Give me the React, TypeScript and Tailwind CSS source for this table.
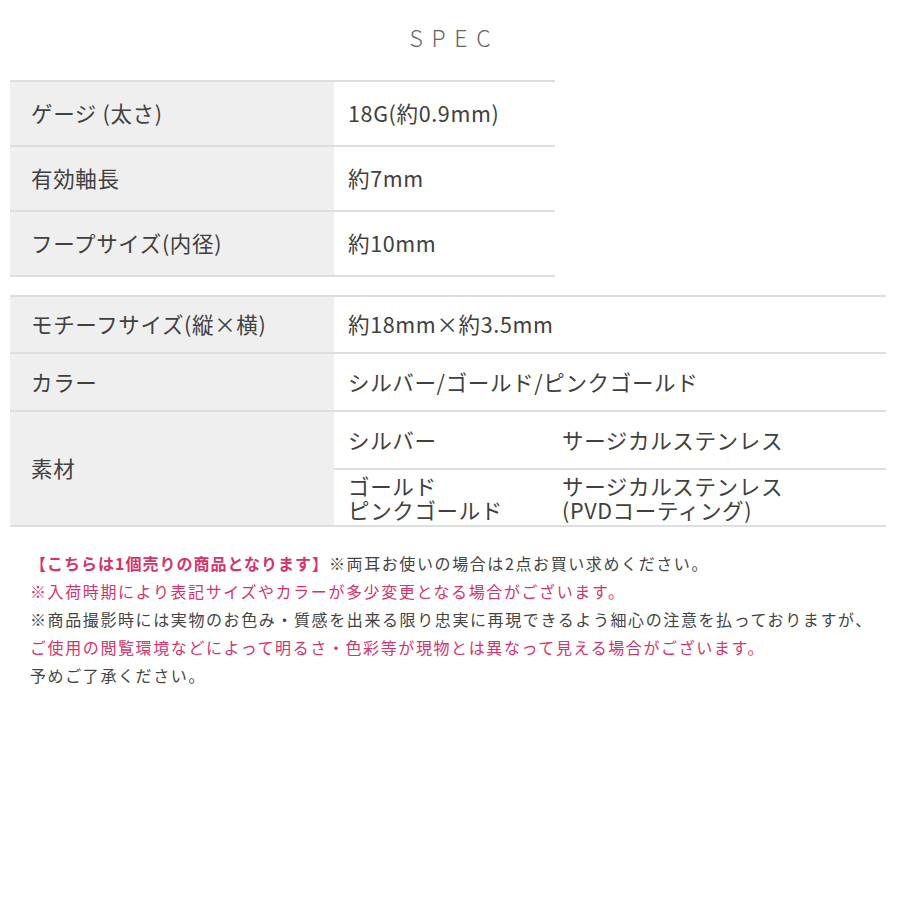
import React from "react";

const font = { fontFamily: '"Noto Sans CJK JP", "Noto Sans", sans-serif' };

function Row1({ label, value }: { label: string; value: string }) {
  return (
    <div className="flex h-[65px] border-b-2 border-[#dedede]">
      <div className="w-[324px] bg-[#efefef] flex items-center pl-[21px]">{label}</div>
      <div className="flex-1 flex items-center pl-[14px]">{value}</div>
    </div>
  );
}

export default function App() {
  return (
    <div className="w-[900px] h-[900px] bg-white text-[#404040]" style={font}>
      <div className="h-[80px] flex items-start justify-center pt-[26px]">
        <div className="text-[23px] font-light tracking-[0.38em] text-[#666] leading-none pl-[0.38em]">SPEC</div>
      </div>
      <div className="ml-[10px] w-[545px] border-t-2 border-[#dedede] text-[21.5px] tracking-[0.03em]">
        <Row1 label="ゲージ (太さ)" value="18G(約0.9mm)" />
        <Row1 label="有効軸長" value="約7mm" />
        <Row1 label="フープサイズ(内径)" value="約10mm" />
      </div>
      <div className="ml-[10px] mt-[18px] w-[876px] border-t-2 border-[#dedede] text-[21.5px] tracking-[0.03em]">
        <div className="flex h-[57px] border-b-2 border-[#dedede]">
          <div className="w-[324px] bg-[#efefef] flex items-center pl-[21px]">モチーフサイズ(縦×横)</div>
          <div className="flex-1 flex items-center pl-[14px]">約18mm×約3.5mm</div>
        </div>
        <div className="flex h-[58px] border-b-2 border-[#dedede]">
          <div className="w-[324px] bg-[#efefef] flex items-center pl-[21px]">カラー</div>
          <div className="flex-1 flex items-center pl-[14px]">シルバー/ゴールド/ピンクゴールド</div>
        </div>
        <div className="flex h-[115px] border-b-2 border-[#dedede]">
          <div className="w-[324px] bg-[#efefef] flex items-center pl-[21px]">素材</div>
          <div className="flex-1 flex flex-col">
            <div className="h-[58px] flex items-center border-b-2 border-[#dedede]">
              <div className="w-[228px] pl-[14px]">シルバー</div>
              <div>サージカルステンレス</div>
            </div>
            <div className="flex-1 flex items-center leading-[24px]">
              <div className="w-[228px] pl-[14px]">
                ゴールド
                <br />
                ピンクゴールド
              </div>
              <div>
                サージカルステンレス
                <br />
                (PVDコーティング)
              </div>
            </div>
          </div>
        </div>
      </div>
      <div className="mt-[22px] pl-[30px] text-[16px] leading-[28px] text-[#444] tracking-[1.6px]">
        <div>
          <span className="font-bold text-[#d6336c] tracking-[1px]">【こちらは1個売りの商品となります】</span>
          <span>※両耳お使いの場合は2点お買い求めください。</span>
        </div>
        <div className="text-[#d6336c]">※入荷時期により表記サイズやカラーが多少変更となる場合がございます。</div>
        <div>※商品撮影時には実物のお色み・質感を出来る限り忠実に再現できるよう細心の注意を払っておりますが、</div>
        <div className="text-[#d6336c]">ご使用の閲覧環境などによって明るさ・色彩等が現物とは異なって見える場合がございます。</div>
        <div>予めご了承ください。</div>
      </div>
    </div>
  );
}
